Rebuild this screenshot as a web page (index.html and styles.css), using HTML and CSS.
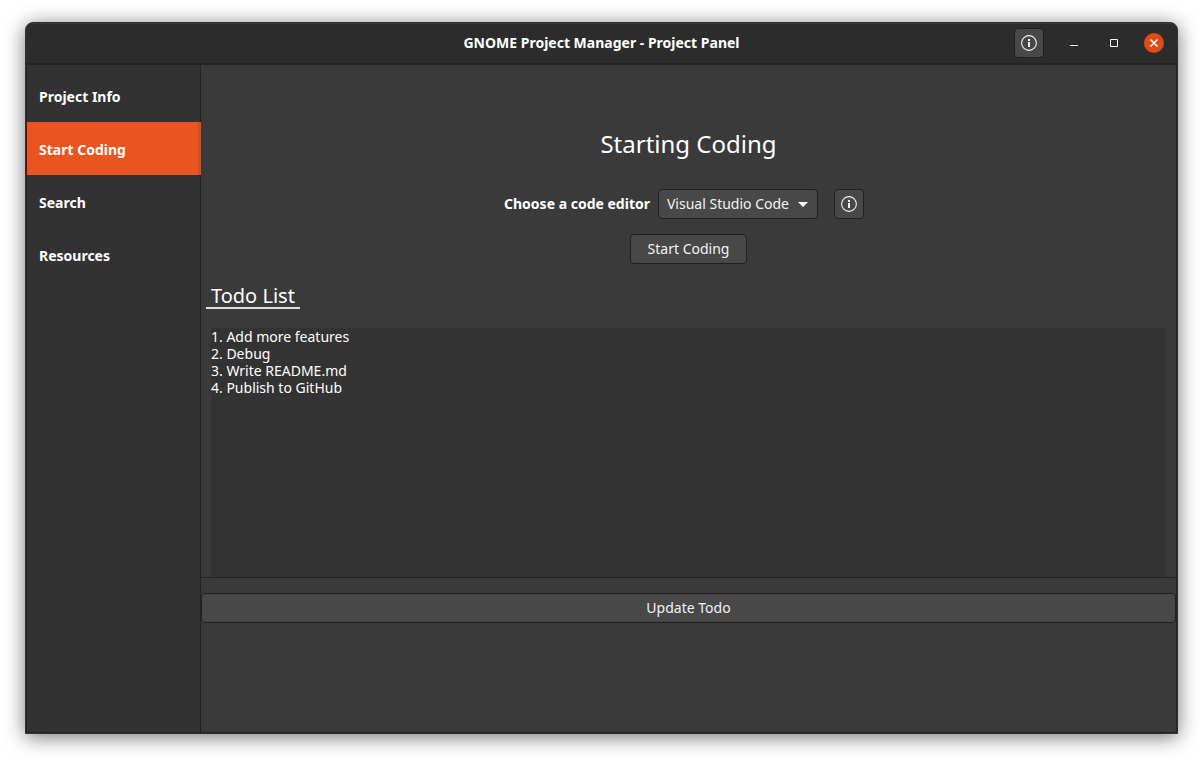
FILE: index.html
```html
<!DOCTYPE html>
<html lang="en">
<head>
<meta charset="utf-8">
<meta name="viewport" content="width=device-width, initial-scale=1">
<title>GNOME Project Manager - Project Panel</title>
<link rel="stylesheet" href="styles.css">
</head>
<body>
<div class="window">
  <header class="titlebar">
    <h1 class="title">GNOME Project Manager - Project Panel</h1>
    <div class="controls">
      <button class="button icon-button" type="button" aria-label="About">
        <svg class="icon" viewBox="0 0 16 16" aria-hidden="true"><circle cx="8" cy="8" r="7.4" fill="none" stroke="currentColor" stroke-width="1.1"/><path d="M7 4h2v2H7zM7 7h2v5H7z" fill="currentColor"/></svg>
      </button>
      <button class="window-button" type="button" aria-label="Minimize">
        <svg class="icon" viewBox="0 0 16 16" aria-hidden="true"><path d="M4 10h8v1H4z" fill="currentColor"/></svg>
      </button>
      <button class="window-button" type="button" aria-label="Maximize">
        <svg class="icon" viewBox="0 0 16 16" aria-hidden="true"><path d="M4.5 4.5h7v7h-7z" fill="none" stroke="currentColor"/></svg>
      </button>
      <button class="window-button close" type="button" aria-label="Close">
        <svg class="icon" viewBox="0 0 16 16" aria-hidden="true"><path d="M4.5 4.5l7 7M11.5 4.5l-7 7" fill="none" stroke="currentColor" stroke-width="1.5"/></svg>
      </button>
    </div>
  </header>
  <div class="body">
    <nav class="sidebar">
      <a class="nav-item" href="#info">Project Info</a>
      <a class="nav-item active" href="#coding" aria-current="page">Start Coding</a>
      <a class="nav-item" href="#search">Search</a>
      <a class="nav-item" href="#resources">Resources</a>
    </nav>
    <main class="content">
      <h2 class="heading">Starting Coding</h2>
      <div class="editor-row">
        <label class="editor-label" for="editor">Choose a code editor</label>
        <select class="button editor-select" id="editor">
          <option>Visual Studio Code</option>
        </select>
        <button class="button icon-button editor-info" type="button" aria-label="Editor information">
          <svg class="icon" viewBox="0 0 16 16" aria-hidden="true"><circle cx="8" cy="8" r="7.4" fill="none" stroke="currentColor" stroke-width="1.1"/><path d="M7 4h2v2H7zM7 7h2v5H7z" fill="currentColor"/></svg>
        </button>
      </div>
      <button class="button start" type="button">Start Coding</button>
      <label class="todo-title" for="todo">Todo List</label>
      <div class="todo-box">
        <textarea class="todo" id="todo" spellcheck="false">1. Add more features
2. Debug
3. Write README.md
4. Publish to GitHub</textarea>
      </div>
      <button class="button update" type="button">Update Todo</button>
    </main>
  </div>
</div>
</body>
</html>
```

FILE: styles.css
```css
* {
  box-sizing: border-box;
}

body {
  margin: 0;
  min-height: 100vh;
  padding: 22px 25px 28px;
  display: flex;
  background: #fff;
  color: #fff;
  font-family: "Noto Sans", "Open Sans", sans-serif;
  font-size: 14px;
  line-height: 17px;
}

button,
select,
textarea {
  font: inherit;
  color: inherit;
}

.window {
  flex: 1;
  display: flex;
  flex-direction: column;
  border: 1px solid #323030;
  border-radius: 8px 8px 0 0;
  background: #3a3a3a;
  box-shadow: 0 3px 20px rgba(0, 0, 0, 0.55);
  overflow: hidden;
}

.titlebar {
  display: grid;
  grid-template-columns: 1fr auto 1fr;
  align-items: center;
  height: 42px;
  padding: 0 13px;
  background: #2c2c2c;
  border-bottom: 2px solid #242424;
  box-shadow: inset 0 1px #383838;
}

.title {
  grid-column: 2;
  margin: 0;
  padding-bottom: 2px;
  font-size: 14px;
  font-weight: 700;
}

.controls {
  display: flex;
  justify-content: flex-end;
  align-items: center;
  gap: 20px;
}

.button {
  height: 30px;
  padding: 0 17px 2px;
  border: 1px solid #202020;
  border-radius: 4px;
  background: #484848;
  color: #f2f2f2;
}

.icon-button {
  width: 30px;
  padding: 0;
  display: grid;
  place-items: center;
}

.icon {
  display: block;
  width: 16px;
  height: 16px;
}

.window-button {
  display: grid;
  place-items: center;
  width: 20px;
  height: 20px;
  padding: 0;
  border: 0;
  border-radius: 50%;
  background: none;
}

.close {
  background: #e04a16;
}

.body {
  flex: 1;
  display: flex;
  border: 1px solid #242424;
  border-top: 0;
}

.sidebar {
  flex: none;
  width: 174px;
  padding-top: 4px;
  background: #323232;
  border-right: 1px solid #222;
}

.nav-item {
  display: block;
  margin-right: -1px;
  padding: 19px 12px 17px;
  color: #fff;
  font-weight: 700;
  text-decoration: none;
}

.active {
  background: #e95420;
  box-shadow: inset -3px 0 #de4b17;
}

.content {
  flex: 1;
  min-width: 0;
  display: flex;
  flex-direction: column;
  align-items: center;
}

.heading {
  margin: 63px 0 29px;
  font-size: 24px;
  font-weight: 400;
  line-height: 32px;
}

.editor-row {
  display: flex;
  align-items: center;
  margin-right: 9px;
}

.editor-label {
  padding-bottom: 2px;
  font-weight: 700;
}

.editor-select {
  width: 160px;
  margin-left: 8px;
  padding: 0 24px 2px 8px;
  appearance: none;
  background: #484848 url("data:image/svg+xml,%3Csvg xmlns='http://www.w3.org/2000/svg' width='10' height='5'%3E%3Cpath d='M0 0h10L5 5z' fill='white'/%3E%3C/svg%3E") no-repeat right 9px center;
}

.editor-info {
  margin-left: 16px;
}

.start {
  margin-top: 15px;
}

.todo-title {
  align-self: flex-start;
  margin: 21px 0 19px 5px;
  padding: 0 5px;
  border-bottom: 2px solid #e0e0e0;
  font-size: 20px;
  line-height: 22px;
}

.todo-box {
  align-self: stretch;
  display: flex;
  padding: 0 10px;
  border-bottom: 1px solid #242424;
}

.todo {
  flex: 1;
  height: 249px;
  padding: 0;
  border: 0;
  outline: 0;
  resize: none;
  background: #333;
  line-height: 17px;
}

.update {
  align-self: stretch;
  margin-top: 15px;
}
```
